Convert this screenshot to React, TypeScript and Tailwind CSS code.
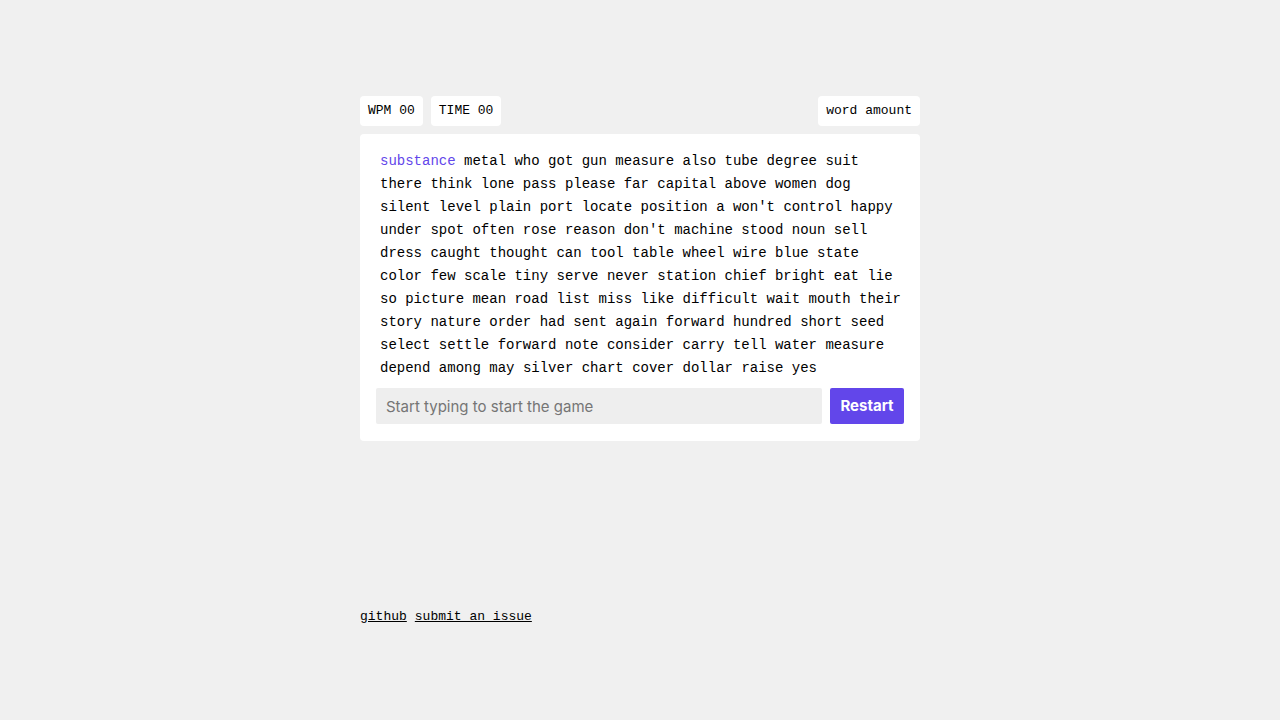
const lines = [
  'substance metal who got gun measure also tube degree suit',
  'there think lone pass please far capital above women dog',
  "silent level plain port locate position a won't control happy",
  "under spot often rose reason don't machine stood noun sell",
  'dress caught thought can tool table wheel wire blue state',
  'color few scale tiny serve never station chief bright eat lie',
  'so picture mean road list miss like difficult wait mouth their',
  'story nature order had sent again forward hundred short seed',
  'select settle forward note consider carry tell water measure',
  'depend among may silver chart cover dollar raise yes',
]

const mono = "font-['Liberation_Mono','Courier_New',monospace]"

function Pill({ label }: { label: string }) {
  return (
    <div className={`h-[30px] px-2 flex items-center bg-white rounded-[4px] text-[13px] text-black ${mono}`}>
      {label}
    </div>
  )
}

export default function App() {
  let first = true
  return (
    <div className="min-h-screen w-full bg-[#f0f0f0]">
      <div className="mx-auto w-[560px] pt-[96px]">
        <div className="flex items-center gap-2">
          <Pill label="WPM 00" />
          <Pill label="TIME 00" />
          <div className="flex-1" />
          <Pill label="word amount" />
        </div>

        <div className="mt-2 bg-white rounded-[4px] px-4 pt-4 pb-[17px]">
          <div className={`px-1 text-[14px] leading-[23px] text-black ${mono}`}>
            {lines.map((line) => (
              <div key={line} className="whitespace-nowrap">
                {line.split(' ').map((word, i) => {
                  const isFirst = first
                  first = false
                  return (
                    <span key={i}>
                      <span className={isFirst ? 'text-[#6246ea]' : ''}>{word}</span>
                      {' '}
                    </span>
                  )
                })}
              </div>
            ))}
          </div>

          <div className="mt-2 flex gap-2 font-['Inter','Liberation_Sans',sans-serif]">
            <input
              type="text"
              placeholder="Start typing to start the game"
              className="flex-1 h-9 px-[10px] bg-[#eeeeee] rounded-[2px] text-[15px] text-black placeholder:text-[#757575] outline-none"
            />
            <button className="h-9 w-[74px] bg-[#6246ea] rounded-[2px] text-white text-[15px] font-bold">
              Restart
            </button>
          </div>
        </div>

        <div className={`mt-[166px] flex gap-2 text-[13px] text-black ${mono}`}>
          <a href="#" className="underline">github</a>
          <a href="#" className="underline">submit an issue</a>
        </div>
      </div>
    </div>
  )
}
